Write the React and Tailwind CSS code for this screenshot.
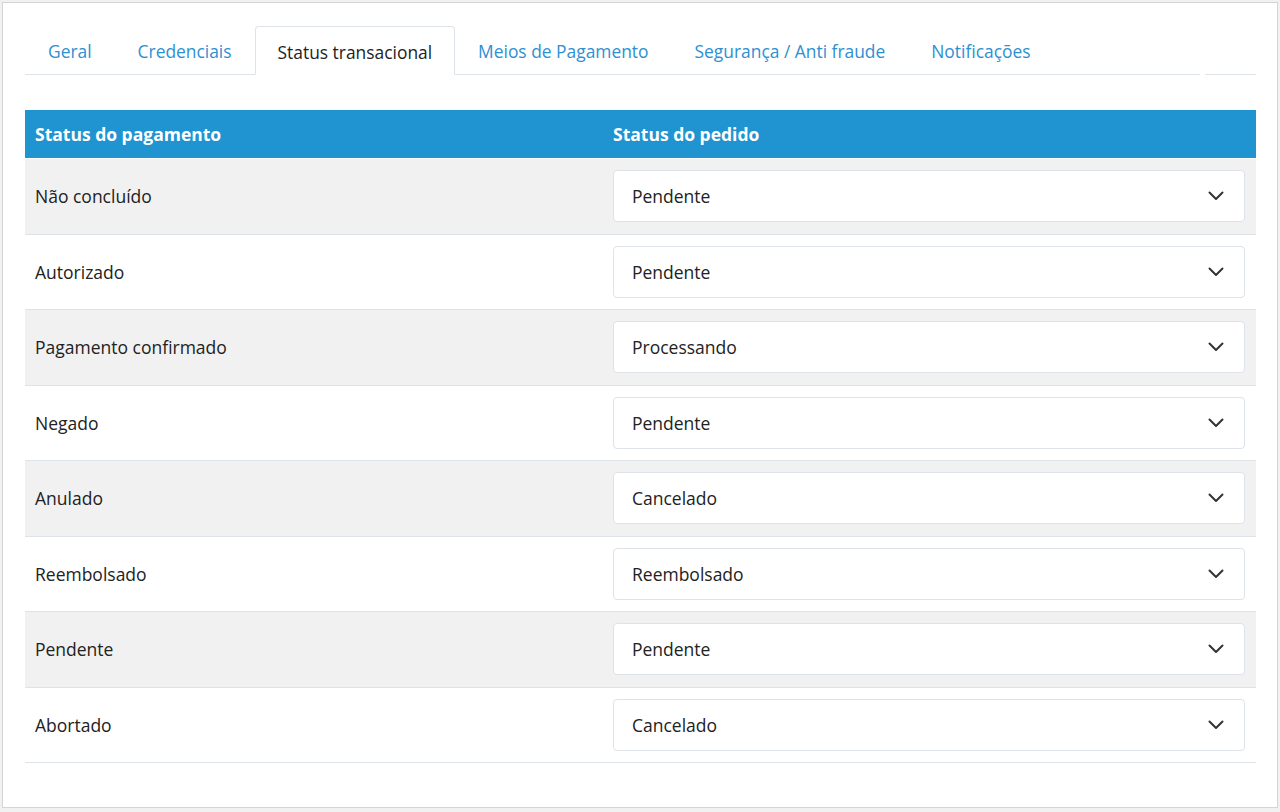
import React from "react";

const tabs = ["Geral", "Credenciais", "Status transacional", "Meios de Pagamento", "Segurança / Anti fraude", "Notificações"];
const rows = [
  ["Não concluído", "Pendente"],
  ["Autorizado", "Pendente"],
  ["Pagamento confirmado", "Processando"],
  ["Negado", "Pendente"],
  ["Anulado", "Cancelado"],
  ["Reembolsado", "Reembolsado"],
  ["Pendente", "Pendente"],
  ["Abortado", "Cancelado"],
];

function Chevron() {
  return (
    <svg width="16" height="10" viewBox="0 0 16 10" fill="none">
      <polyline points="1.5,1.5 8,8 14.5,1.5" stroke="#333" strokeWidth="2" strokeLinecap="round" strokeLinejoin="round" />
    </svg>
  );
}

export default function App() {
  return (
    <div className="w-[1280px] h-[812px] bg-[#f1f1f1] pl-[2px] pt-[2px] text-[#222]" style={{ fontFamily: '"Open Sans", sans-serif' }}>
      <div className="w-[1276px] h-[806px] bg-white border border-[#d4d4d4] pl-[22px] pr-[20px] pt-[23px]">
        <div className="flex items-end">
          <div className="flex w-[1175px] border-b border-[#dde3e8] h-[49px]">
            {tabs.map((t, i) =>
              i === 2 ? (
                <div key={t} className="-mb-px h-[49px] flex items-center pt-[3px] px-[22px] bg-white border border-[#dde3e8] border-b-white rounded-t-[4px] text-[17.4px] text-[#222]">
                  {t}
                </div>
              ) : (
                <div key={t} className="h-[48px] flex items-center pt-[3px] px-[23px] text-[17.4px] text-[#2d90d2]">
                  {t}
                </div>
              )
            )}
          </div>
          <div className="w-[5px]" />
          <div className="w-[51px] border-b border-[#dde3e8]" />
        </div>
        <div className="mt-[35px] w-[1231px]">
          <div className="flex h-[48px] pt-[1px] items-center bg-[#2093d1] text-white font-bold text-[17.5px]">
            <div className="w-[578px] pl-[10px]">Status do pagamento</div>
            <div className="flex-1 pl-[10px]">Status do pedido</div>
          </div>
          <div className="h-px" />
          {rows.map(([a, b], i) => (
            <div key={i} className={`flex items-center h-[75.5px] border-b border-[#dde3e8] text-[17.5px] ${i % 2 === 0 ? "bg-[#f1f1f1]" : "bg-white"}`}>
              <div className="w-[578px] pl-[10px]">{a}</div>
              <div className="flex-1 pl-[10px] pr-[11px]">
                <div className="h-[52px] flex items-center justify-between bg-white border border-[#dde3e8] rounded-[4px] pl-[18px] pr-[20px]">
                  <span>{b}</span>
                  <Chevron />
                </div>
              </div>
            </div>
          ))}
        </div>
      </div>
    </div>
  );
}
